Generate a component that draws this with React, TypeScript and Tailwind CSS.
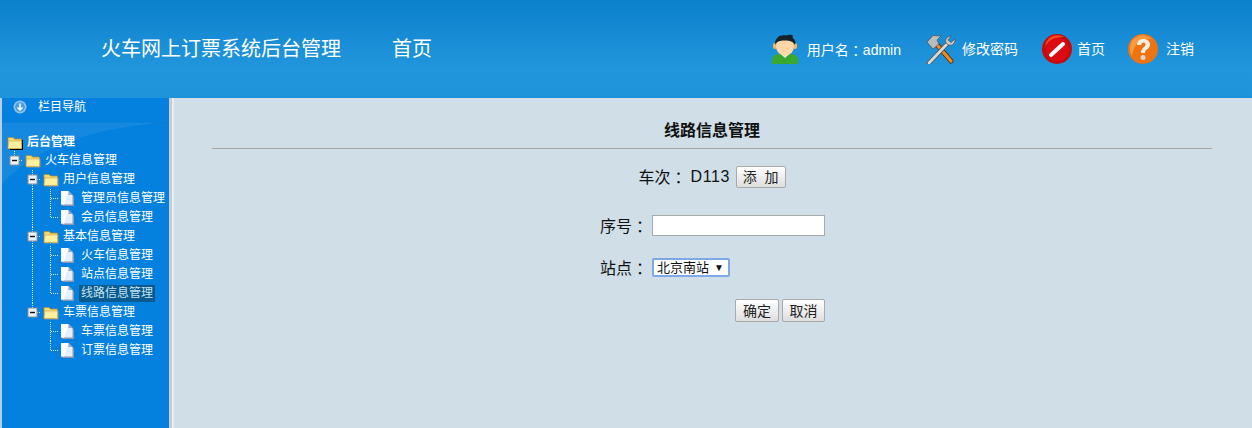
const CJK = "font-['Arial','Liberation_Sans','Noto_Sans_CJK_SC',sans-serif]";

type Cell = "blank" | "line" | "join" | "joinBottom" | "minus" | "minusBottom";

type Row = {
  cells: Cell[];
  kind: "folder" | "page";
  label: string;
  active?: boolean;
};

const ROWS: Row[] = [
  { cells: ["minusBottom"], kind: "folder", label: "火车信息管理" },
  { cells: ["blank", "minus"], kind: "folder", label: "用户信息管理" },
  { cells: ["blank", "line", "join"], kind: "page", label: "管理员信息管理" },
  { cells: ["blank", "line", "joinBottom"], kind: "page", label: "会员信息管理" },
  { cells: ["blank", "minus"], kind: "folder", label: "基本信息管理" },
  { cells: ["blank", "line", "join"], kind: "page", label: "火车信息管理" },
  { cells: ["blank", "line", "join"], kind: "page", label: "站点信息管理" },
  { cells: ["blank", "line", "joinBottom"], kind: "page", label: "线路信息管理", active: true },
  { cells: ["blank", "minusBottom"], kind: "folder", label: "车票信息管理" },
  { cells: ["blank", "blank", "join"], kind: "page", label: "车票信息管理" },
  { cells: ["blank", "blank", "joinBottom"], kind: "page", label: "订票信息管理" },
];

function TreeCell({ type }: { type: Cell }) {
  const dots = { stroke: "#d8e6ee", strokeDasharray: "1 1", strokeWidth: 1 };
  return (
    <svg width="18" height="19" viewBox="0 0 18 19" className="flex-none">
      {type === "line" && <path d="M9.5 0V19" {...dots} />}
      {type === "join" && <path d="M9.5 0V19M10 9.5H18" {...dots} />}
      {type === "joinBottom" && <path d="M9.5 0V9.5M10 9.5H18" {...dots} />}
      {type === "minus" && <path d="M9.5 0V19M14 9.5H18" {...dots} />}
      {type === "minusBottom" && <path d="M9.5 0V5M14 9.5H18" {...dots} />}
      {(type === "minus" || type === "minusBottom") && (
        <g>
          <rect x="5" y="5" width="9" height="9" fill="#eef1f3" stroke="#8b8f94" />
          <path d="M7 9.5H12" stroke="#111" strokeWidth="1.4" />
        </g>
      )}
    </svg>
  );
}

function FolderIcon({ root = false }: { root?: boolean }) {
  return (
    <svg width="18" height="19" viewBox="0 0 18 19" className="flex-none">
      {root ? (
        <path d="M4 6H10L11 7H18V17H5Z" fill="#000" />
      ) : (
        <path d="M4 7H9L10 8H17.500V16.500H4Z" fill="#8f96ad" />
      )}
      <path d="M3 4.500H8L9.500 6H16.500V15.500H3Z" fill="#f6d96f" stroke="#a9893c" strokeWidth="0.8" />
      <path d="M3 15.500L4 8H16.500V15.500Z" fill="#fff0a0" stroke="#c9a84c" strokeWidth="0.6" />
    </svg>
  );
}

function PageIcon() {
  return (
    <svg width="18" height="19" viewBox="0 0 18 19" className="flex-none">
      <path d="M3.500 3.500H11L15 7.500V17H3.500Z" fill="#8d96b4" />
      <path d="M2 2H9.500L13.500 6V15.500H2Z" fill="#e6effc" />
      <path d="M2 2H9.500L5 15.500H2Z" fill="#ffffff" />
      <path d="M9.500 2V6H13.500Z" fill="#98a2c0" />
    </svg>
  );
}

function UserIcon() {
  return (
    <svg width="28" height="30" viewBox="0 0 28 30">
      <path d="M1 30V25C1 21.500 6 19.500 14 19.500S27 21.500 27 25V30Z" fill="#39a832" />
      <path d="M9.500 19.500L14 24L18.500 19.500Z" fill="#fff" />
      <rect x="2" y="9" width="4" height="6" rx="2" fill="#f5b56c" />
      <rect x="22" y="9" width="4" height="6" rx="2" fill="#f5b56c" />
      <ellipse cx="14" cy="12" rx="9" ry="10" fill="#ffd7a6" />
      <path d="M4 11C3.500 3 10 0 15 1.500C17 0.500 21 0.500 22 1.500C21.500 2.500 21 3 22 4C24.500 6 25 9 24 11C22 7.500 19 6.500 14 6.500C8.500 6.500 5.500 7.500 4 11Z" fill="#15222a" />
    </svg>
  );
}

function ToolsIcon() {
  return (
    <svg width="32" height="30" viewBox="0 0 32 30">
      <path d="M27 27L10 7" stroke="#4a3210" strokeWidth="5" strokeLinecap="round" />
      <path d="M27 27L14 12" stroke="#f08a1c" strokeWidth="3.400" strokeLinecap="round" />
      <path d="M3 8L9 1.500L17 2L13 6L15 10L9 15Z" fill="#b9bdc0" stroke="#55585b" strokeWidth="0.8" />
      <path d="M5 29L24 9" stroke="#55585b" strokeWidth="4.600" strokeLinecap="round" />
      <path d="M5 29L24 9" stroke="#d8dadb" strokeWidth="2.600" strokeLinecap="round" />
      <path d="M23 10C20 7 22 2.500 27 2L24 6L27 8.500L31 5C31.500 10 27 13 23 10Z" fill="#c9cccd" stroke="#55585b" strokeWidth="0.8" />
    </svg>
  );
}

function NoEntryIcon() {
  return (
    <svg width="30" height="30" viewBox="0 0 30 30">
      <circle cx="15" cy="15" r="15" fill="#c40a0a" />
      <path d="M3 13A12.500 12.500 0 0 1 22 3C13 3 6 7 3 13Z" fill="#f24a1a" />
      <circle cx="15.500" cy="15.500" r="11.500" fill="#dd0a12" />
      <path d="M9 21L21 10" stroke="#fff" strokeWidth="4" strokeLinecap="round" />
    </svg>
  );
}

function HelpIcon() {
  return (
    <svg width="30" height="30" viewBox="0 0 30 30">
      <circle cx="15" cy="15" r="15" fill="#ed7410" />
      <path d="M2 15A13 13 0 0 1 24 5C14 4 6 8 4 22C2.700 20 2 17.500 2 15Z" fill="#fb9a3c" />
      <path d="M9 11C9 7 12 5 15.500 5C19.500 5 22 7.500 22 10.500C22 15 17 15 17 19H13C13 13.500 17.500 13.500 17.500 10.500C17.500 9 16.500 8.500 15.500 8.500C14 8.500 13.200 9.500 13.200 11Z" fill="#f4efe8" />
      <circle cx="15" cy="23.500" r="2.500" fill="#ddd6cc" />
    </svg>
  );
}

function NavArrowIcon() {
  return (
    <svg width="14" height="14" viewBox="0 0 14 14">
      <circle cx="7" cy="7" r="6.500" fill="#8fc4ec" />
      <circle cx="7" cy="7" r="4.800" fill="#4d9edd" />
      <path d="M7 3.500V9.500M4.500 7.500L7 10L9.500 7.500" stroke="#fff" strokeWidth="1.500" fill="none" />
    </svg>
  );
}

// Traditional-Chinese glyph of the colon sits centred in its cell, like the picture.
function Colon() {
  return <span className="relative top-px font-['Noto_Sans_CJK_TC',sans-serif]">：</span>;
}

function HeaderLink({ icon, children, textClass }: { icon: React.ReactNode; children: React.ReactNode; textClass: string }) {
  return (
    <div className="flex items-center">
      {icon}
      <span className={`text-sm leading-none whitespace-nowrap text-white ${textClass}`}>{children}</span>
    </div>
  );
}

function Header() {
  return (
    <header className="flex h-[98px] flex-none items-center bg-gradient-to-b from-[#0a80cb] via-[#2196dc] via-70% to-[#1f94da] pl-[101px] pr-[58px] text-white">
      <span className="text-[20px] leading-none">火车网上订票系统后台管理</span>
      <span className="ml-[51px] text-[20px] leading-none">首页</span>
      <div className="ml-auto flex items-center">
        <HeaderLink icon={<UserIcon />} textClass="ml-2">
          用户名<Colon />admin
        </HeaderLink>
        <div className="ml-[23px]">
          <HeaderLink icon={<ToolsIcon />} textClass="ml-[6px]">修改密码</HeaderLink>
        </div>
        <div className="ml-6">
          <HeaderLink icon={<NoEntryIcon />} textClass="ml-[5px]">首页</HeaderLink>
        </div>
        <div className="ml-[23px]">
          <HeaderLink icon={<HelpIcon />} textClass="ml-2">注销</HeaderLink>
        </div>
      </div>
    </header>
  );
}

function Sidebar() {
  return (
    <aside className="relative flex w-[172px] flex-none flex-col overflow-hidden border-l-2 border-r-[3px] border-l-[#b9cfe0] border-r-[#c9cbcd] bg-[#0480de] text-xs text-white">
      <svg className="absolute left-0 top-[24px] h-[70px] w-[167px]" viewBox="0 0 167 70" preserveAspectRatio="none">
        <path d="M0 0H167C110 4 40 18 0 62Z" fill="#fff" fillOpacity="0.07" />
        <path d="M0 0H167" stroke="#0368b8" strokeOpacity="0.5" />
      </svg>
      <div className="relative flex h-[18px] items-center pl-[11px]">
        <NavArrowIcon />
        <span className="ml-[11px]">栏目导航</span>
      </div>
      <div className="relative mt-[17px] pl-[3px]">
        <div className="flex h-[18px] items-center">
          <FolderIcon root />
          <span className="ml-1 font-bold">后台管理</span>
        </div>
        {ROWS.map((row, i) => (
          <div key={i} className="flex h-[19px] items-center">
            {row.cells.map((c, j) => (
              <TreeCell key={j} type={c} />
            ))}
            {row.kind === "folder" ? <FolderIcon /> : <PageIcon />}
            <span
              className={`ml-[2px] whitespace-nowrap px-[2px] leading-[17px] ${
                row.active ? "bg-[#0a5a8e] text-[#c4e4f0]" : ""
              }`}
            >
              {row.label}
            </span>
          </div>
        ))}
      </div>
    </aside>
  );
}

function GrayButton({ children, className }: { children: React.ReactNode; className: string }) {
  return (
    <button
      type="button"
      className={`rounded-[2px] border border-[#a9a9a9] bg-gradient-to-b from-white to-[#dedede] text-sm leading-none text-[#222] ${className}`}
    >
      {children}
    </button>
  );
}

function Content() {
  return (
    <main className="flex flex-1 flex-col items-center border-l-2 border-l-[#e6eef3] bg-[#cfdee7] pr-[2px] text-base text-[#111]">
      <h1 className="mt-[23px] h-[20px] text-base font-bold leading-5">线路信息管理</h1>
      <div className="mt-[7px] h-px w-[1000px] border-t border-[#a6a6a6]" />
      <div className="mt-[17px] flex h-[22px] items-center">
        <span>车次<Colon /></span>
        <span className="ml-1 w-[40px] tracking-[0.6px]">D113</span>
        <GrayButton className="ml-[5px] h-[22px] w-[50px]">添&nbsp;&nbsp;加</GrayButton>
      </div>
      <div className="ml-px mt-[27px] flex h-[21px] w-[225px] items-center">
        <span className="w-[52px] pt-px">序号<Colon /></span>
        <input className="h-[21px] w-[173px] border border-[#a9a9a9] bg-white" />
      </div>
      <div className="ml-px mt-[22px] flex h-[19px] w-[225px] items-center">
        <span className="w-[52px] pt-px">站点<Colon /></span>
        <div className="relative h-[19px] w-[78px]">
          <select className="block h-full w-full appearance-none rounded-[2px] border-2 border-[#7fa8e8] bg-white pl-[3px] text-[13px] leading-none text-[#111] outline-none">
            <option>北京南站</option>
          </select>
          <span className="pointer-events-none absolute right-[6px] top-[4px] text-[10px] leading-3">▼</span>
        </div>
      </div>
      <div className="ml-px mt-[22px] flex w-[225px] justify-end gap-[3px]">
        <GrayButton className="h-[23px] w-[44px]">确定</GrayButton>
        <GrayButton className="h-[23px] w-[43px]">取消</GrayButton>
      </div>
    </main>
  );
}

export default function App() {
  return (
    <div className={`flex h-[428px] w-[1252px] flex-col overflow-hidden ${CJK}`}>
      <Header />
      <div className="flex flex-1">
        <Sidebar />
        <Content />
      </div>
    </div>
  );
}
